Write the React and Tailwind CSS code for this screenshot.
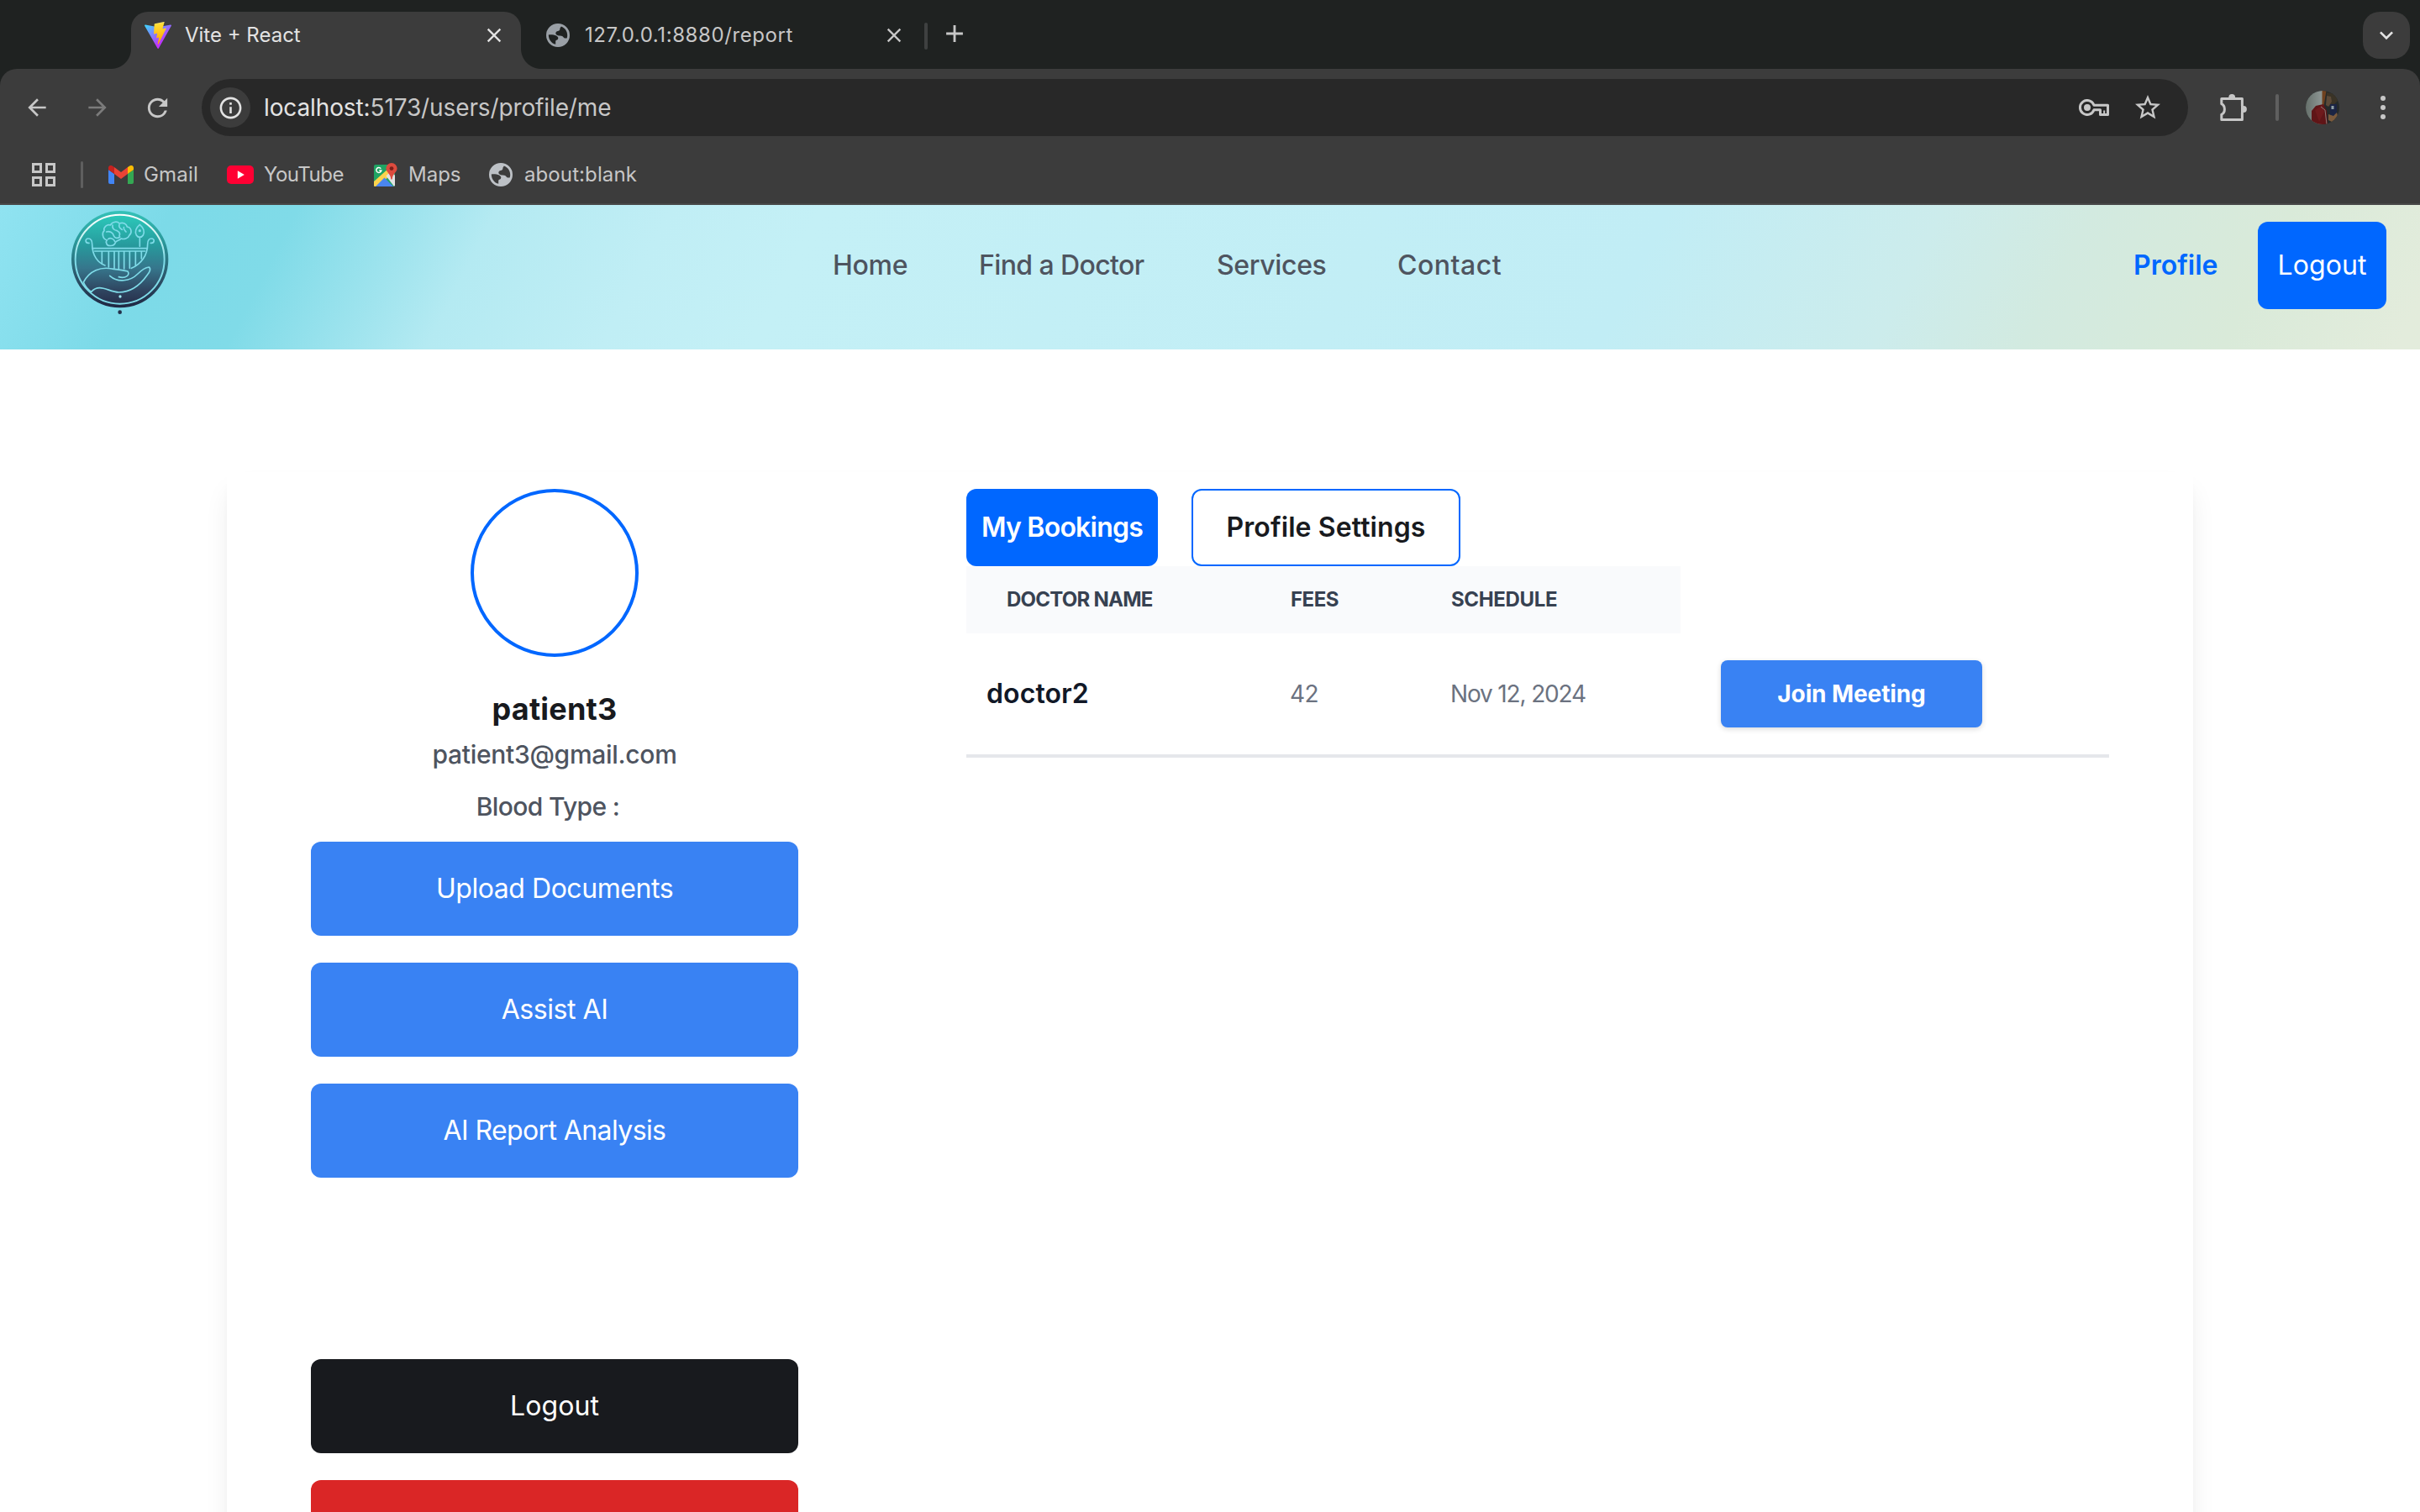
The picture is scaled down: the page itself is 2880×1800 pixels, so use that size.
import {
  MdAdd,
  MdArrowBack,
  MdArrowForward,
  MdClose,
  MdInfoOutline,
  MdKeyboardArrowDown,
  MdRefresh,
  MdStarBorder,
} from "react-icons/md";

function ViteLogo() {
  return (
    <svg className="size-8 shrink-0" viewBox="0 0 256 257">
      <defs>
        <linearGradient id="viteA" x1="-.828%" x2="57.636%" y1="7.652%" y2="78.411%">
          <stop offset="0%" stopColor="#41D1FF" />
          <stop offset="100%" stopColor="#BD34FE" />
        </linearGradient>
        <linearGradient id="viteB" x1="43.376%" x2="50.316%" y1="2.242%" y2="89.03%">
          <stop offset="0%" stopColor="#FFEA83" />
          <stop offset="8.333%" stopColor="#FFDD35" />
          <stop offset="100%" stopColor="#FFA800" />
        </linearGradient>
      </defs>
      <path
        fill="url(#viteA)"
        d="M255.153 37.938L134.897 252.976c-2.483 4.44-8.862 4.466-11.382.048L.875 37.958c-2.746-4.814 1.371-10.646 6.827-9.67l120.385 21.517a6.537 6.537 0 0 0 2.322-.004l117.867-21.483c5.438-.991 9.574 4.796 6.877 9.62Z"
      />
      <path
        fill="url(#viteB)"
        d="M185.432.063L96.44 17.501a3.268 3.268 0 0 0-2.634 3.014l-5.474 92.456a3.268 3.268 0 0 0 3.997 3.378l24.777-5.718c2.318-.535 4.413 1.507 3.936 3.838l-7.361 36.047c-.495 2.426 1.782 4.5 4.151 3.78l15.304-4.649c2.372-.72 4.652 1.36 4.15 3.788l-11.698 56.621c-.732 3.542 3.979 5.473 5.943 2.437l1.313-2.028l72.516-144.72c1.215-2.423-.88-5.186-3.54-4.672l-25.505 4.922c-2.396.462-4.435-1.77-3.759-4.114l16.646-57.705c.677-2.35-1.37-4.583-3.769-4.113Z"
      />
    </svg>
  );
}

function Globe({ className }) {
  return (
    <svg className={className} viewBox="2 2 20 20" fill="currentColor" fillRule="evenodd">
      <path d="M12 2a10 10 0 1 0 0 20a10 10 0 0 0 0-20zM4 11.6c2.6-.2 5 .1 6.600.8c1.600.8 2 2 1.300 3c-.6.8-1.900.6-1.900 1.800v2.500C6.600 18.900 4 15.600 4 11.600zM14.800 4.500C17.900 5.700 20 8.600 20 12c0 .9-.1 1.700-.4 2.500c-1.600.3-2.600-.3-3.300-1.300c-.7-1-2-.7-3.600-.9c-1.700-.2-2.900-1.200-2.600-2.500c.3-1.200 1.600-1.100 2.800-1.700c1.200-.6.5-1.900 1.100-2.600z" />
    </svg>
  );
}

function AppsGrid() {
  return (
    <svg className="size-7 shrink-0" viewBox="0 0 28 28" fill="none" stroke="#c7c7c7" strokeWidth="3">
      <rect x="1.500" y="1.500" width="9" height="9" />
      <rect x="17.500" y="1.500" width="9" height="9" />
      <rect x="1.500" y="17.500" width="9" height="9" />
      <rect x="17.500" y="17.500" width="9" height="9" />
    </svg>
  );
}

function GmailLogo() {
  return (
    <svg className="h-[22px] w-[30px] shrink-0" viewBox="0 0 30 22">
      <path fill="#4285f4" d="M2 22h5V10L0 5v15a2 2 0 0 0 2 2z" />
      <path fill="#34a853" d="M23 22h5a2 2 0 0 0 2-2V5l-7 5z" />
      <path fill="#fbbc04" d="M23 2v8l7-5V2.700c0-2.500-2.900-3.500-4.700-2.200z" />
      <path fill="#ea4335" d="M7 10V2l8 6l8-6v8l-8 6z" />
      <path fill="#c5221f" d="M0 2.700V5l7 5V2L4.700.5C2.900-.8 0 .2 0 2.700z" />
    </svg>
  );
}

function YouTubeLogo() {
  return (
    <svg className="h-[22px] w-8 shrink-0" viewBox="0 0 32 22">
      <rect width="32" height="22" rx="5" fill="#ff0033" />
      <path fill="#fff" d="M12.800 6.200v9.600l8-4.800z" />
    </svg>
  );
}

function MapsLogo() {
  return (
    <svg className="h-7 w-[30px] shrink-0" viewBox="0 0 30 28">
      <rect x="1" y="2" width="25" height="26" rx="2" fill="#1fa463" />
      <path fill="#fbd34d" d="M1 22L19 6l4 6L6 28H2a1 1 0 0 1-1-1z" />
      <path fill="#4a86f0" d="M3 28L13.500 17.500L24 28z" />
      <path fill="#e3e3e3" d="M15.500 15.500L22 9l4 6v11.500L25 28z" />
      <path fill="none" stroke="#fff" strokeWidth="1.500" d="M9.300 6.700A3 3 0 1 0 9.800 9H7.200" />
      <path fill="#dd4b3e" d="M22 0a6.600 6.600 0 0 1 6.600 6.600c0 4.400-5.600 6.400-5.900 13h-1.400c-.3-6.600-5.900-8.600-5.900-13A6.600 6.600 0 0 1 22 0z" />
      <circle cx="22" cy="6.600" r="2.400" fill="#7d1f1a" />
    </svg>
  );
}

function KeyIcon() {
  return (
    <svg className="h-5 w-9 shrink-0" viewBox="0 0 36 20" fill="none" stroke="#c7c7c7">
      <path
        strokeWidth="3"
        strokeLinejoin="round"
        d="M18 7.300A8.500 8.500 0 1 0 18 12.700H25.500V18.500H34.500V7.300z"
      />
      <circle cx="10" cy="10" r="4" fill="#c7c7c7" stroke="none" />
      <path strokeWidth="2" d="M30.200 13.500V18" />
    </svg>
  );
}

function PuzzleIcon() {
  return (
    <svg className="size-9 shrink-0" viewBox="0 0 36 36">
      <path
        fill="none"
        stroke="#c7c7c7"
        strokeWidth="3"
        strokeLinejoin="round"
        d="M3.800 7.500H28.400V32.500H3.800V26.300C8.600 24 8.600 16 3.800 13.700z"
      />
      <circle cx="16.200" cy="6" r="3.900" fill="#c7c7c7" />
      <circle cx="30" cy="20" r="3.900" fill="#c7c7c7" />
      <path fill="#3c3c3c" d="M12 9H20V13H12zM23 16H27V24H23z" />
    </svg>
  );
}

function Avatar() {
  return (
    <svg className="size-10 shrink-0" viewBox="0 0 40 40">
      <defs>
        <clipPath id="avatarClip">
          <circle cx="20" cy="20" r="20" />
        </clipPath>
        <linearGradient id="avatarWall" x1="0" x2="1" y1="0" y2="0">
          <stop offset="0" stopColor="#66706b" />
          <stop offset="1" stopColor="#8f9896" />
        </linearGradient>
      </defs>
      <g clipPath="url(#avatarClip)">
        <rect width="40" height="40" fill="#252a2a" />
        <rect width="20" height="40" fill="url(#avatarWall)" />
        <path fill="#70421f" d="M19.500 0h5l-3 18h-2z" />
        <path fill="#3a3326" d="M25 2l10 2l3 8l-6 6l-7-1z" />
        <path fill="#5c4a38" d="M25 6l5 1l1 6l-4 6l-3-2z" />
        <path fill="#5f1517" d="M7 40V24l5-6l9-2l4 8l1 16z" />
        <path fill="#6e1a1c" d="M11 23l9-6l2 8l-6 12z" />
        <path fill="none" stroke="#8a7a76" strokeWidth="1" d="M18 19l5 4l2 17" />
        <path fill="#1b2444" d="M29 16h8v14h-8z" />
        <rect x="30.500" y="18" width="3" height="4" fill="#8fa0a4" />
        <path fill="#7b5a3c" d="M27 28l6 2l4-4l1 4l-5 8l-6-3z" />
      </g>
    </svg>
  );
}

function SiteLogo() {
  return (
    <svg className="h-32 w-[122px] shrink-0" viewBox="66 24 366 384" fill="none">
      <defs>
        <linearGradient id="logoRim" x1="0" x2="0" y1="0" y2="1">
          <stop offset="0" stopColor="#35c2b8" />
          <stop offset=".35" stopColor="#2a9397" />
          <stop offset=".7" stopColor="#2c5268" />
          <stop offset="1" stopColor="#1f2742" />
        </linearGradient>
        <linearGradient id="logoFace" x1="0" x2="0" y1="0" y2="1">
          <stop offset="0" stopColor="#2cc9ba" />
          <stop offset=".35" stopColor="#27999c" />
          <stop offset=".6" stopColor="#36768c" />
          <stop offset=".85" stopColor="#2f4560" />
          <stop offset="1" stopColor="#27304c" />
        </linearGradient>
        <linearGradient id="logoRing" x1="0" x2="0" y1="0" y2="1">
          <stop offset="0" stopColor="#ffffff" />
          <stop offset=".25" stopColor="#c9f3f2" />
          <stop offset=".5" stopColor="#7fdbe8" />
          <stop offset="1" stopColor="#7fdbe8" />
        </linearGradient>
      </defs>
      <circle cx="248" cy="206" r="173" fill="url(#logoRim)" />
      <circle cx="248" cy="206" r="159" fill="url(#logoFace)" stroke="url(#logoRing)" strokeWidth="6" />
      <g stroke="#7fdbe8" strokeWidth="5" strokeLinecap="round" strokeLinejoin="round">
        <path d="M138 148c-14 2-16-16-3-16c12 0 14 10 14 20c0 40 20 66 46 76M358 148c14 2 16-16 3-16c-12 0-14 10-14 20c0 40-24 72-58 86" />
        <path d="M150 167H346M158 177H338M184 178V222M208 178V234M228 178V238M244 178V240M263 178V240M283 178V238M304 178V228M325 178V204" />
        <path d="M202 138c-18-6-18-28-10-34c-4-14 12-24 22-20c8-14 26-14 32-6c14-6 26 2 28 12c16 2 18 22 8 30c-4 12-20 16-30 12c-6 8-16 6-20 14c-4 14-30 16-32 2c-2-4 0-8 2-10" />
        <path d="M200 108c12-4 24 4 26 14c4 10 14 10 22 4M222 84c-2 12 6 18 16 20c8 4 12 10 8 18M246 82c-4 10 4 14 10 18M262 92c-2 8 4 12 8 16M206 134c8-6 20-2 24 8" />
        <path d="M319 82c-14 12-18 26-12 38c5 9 19 9 24 0c6-12 2-26-12-38zM319 128V160" />
        <path d="M118 288C140 246 180 232 220 240C245 243 262 245 276 249C286 262 268 276 244 269M212 265C240 290 284 286 312 258C324 246 338 236 352 234C360 240 354 252 346 262C318 302 284 324 244 324C206 322 176 290 146 322M118 288c6 14 16 26 28 34" />
      </g>
      <circle cx="319" cy="104" r="5" fill="#7fdbe8" />
      <circle cx="249" cy="339" r="5" fill="#9feaf2" />
      <circle cx="248" cy="395" r="7" fill="#22304a" />
    </svg>
  );
}

function TabStrip() {
  return (
    <div className="flex h-[82px] items-end bg-[#1f2221] pl-[132px]">
      <div className="size-6 bg-[radial-gradient(circle_at_0_0,transparent_23.5px,#3c3c3c_24.5px)]" />
      <div className="flex h-[68px] w-[464px] items-center rounded-t-[20px] bg-[#3c3c3c] pr-[18px] pb-3 pl-4">
        <ViteLogo />
        <span className="ml-4 flex-1 text-2xl text-[#e3e3e3]">Vite + React</span>
        <MdClose className="size-7 text-[#e3e3e3]" />
      </div>
      <div className="size-6 bg-[radial-gradient(circle_at_100%_0,transparent_23.5px,#3c3c3c_24.5px)]" />
      <div className="flex h-[68px] w-[434px] items-center pb-3 pl-1.5">
        <Globe className="size-7 shrink-0 text-[#9aa0a6]" />
        <span className="ml-[18px] flex-1 text-2xl tracking-[0.6px] text-[#c7c7c7]">127.0.0.1:8880/report</span>
        <MdClose className="size-7 text-[#c7c7c7]" />
      </div>
      <div className="mb-[23px] ml-[22px] h-8 w-1 rounded-full bg-[#3f4141]" />
      <MdAdd className="mb-[25px] ml-[15px] size-[34px] text-[#c7c7c7]" />
      <div className="mr-3 mb-3 ml-auto flex h-14 w-14 items-center justify-center rounded-[20px] bg-[#3c3c3c]">
        <MdKeyboardArrowDown className="size-8 text-[#e3e3e3]" />
      </div>
    </div>
  );
}

function Toolbar() {
  return (
    <div className="bg-[#1f2221]">
      <div className="flex h-[92px] items-center rounded-t-[20px] bg-[#3c3c3c] pl-7">
        <MdArrowBack className="size-8 text-[#c7c7c7]" />
        <MdArrowForward className="ml-10 size-8 text-[#7b7b7b]" />
        <MdRefresh className="ml-[38px] size-[35px] text-[#c7c7c7]" />
        <div className="ml-[35px] flex h-[68px] w-[2364px] items-center rounded-full bg-[#282828] pl-2.5">
          <div className="flex size-12 items-center justify-center rounded-full bg-[#3c3c3c]">
            <MdInfoOutline className="size-[31px] text-[#e3e3e3]" />
          </div>
          <span className="ml-4 flex-1 text-[28px] tracking-[-0.12px] text-[#c7c7c7]">
            <span className="text-[#e3e3e3]">localhost:</span>5173/users/profile/me
          </span>
          <KeyIcon />
          <MdStarBorder className="mr-[30px] ml-[28px] size-9 text-[#c7c7c7]" />
        </div>
        <div className="ml-9 flex items-center">
          <PuzzleIcon />
          <div className="ml-8 h-8 w-1 rounded-full bg-[#5f5f5f]" />
          <div className="ml-8">
            <Avatar />
          </div>
          <div className="ml-[49px] flex flex-col gap-[5px]">
            <div className="size-1.5 rounded-full bg-[#c7c7c7]" />
            <div className="size-1.5 rounded-full bg-[#c7c7c7]" />
            <div className="size-1.5 rounded-full bg-[#c7c7c7]" />
          </div>
        </div>
      </div>
    </div>
  );
}

function BookmarksBar() {
  return (
    <div className="flex h-[70px] items-center border-b-2 border-[#484848] bg-[#3c3c3c] pb-px pl-[38px] text-2xl text-[#c7c7c7]">
      <AppsGrid />
      <div className="ml-[30px] h-8 w-[3px] rounded-full bg-[#5f5f5f]" />
      <div className="ml-[30px] flex w-[141px] items-center">
        <GmailLogo />
        <span className="ml-3 tracking-[0.2px]">Gmail</span>
      </div>
      <div className="flex w-[174px] items-center">
        <YouTubeLogo />
        <span className="ml-3 tracking-[-0.5px]">YouTube</span>
      </div>
      <div className="flex w-[138px] items-center">
        <MapsLogo />
        <span className="ml-3">Maps</span>
      </div>
      <div className="flex items-center">
        <Globe className="size-7 shrink-0 text-[#bdc1c6]" />
        <span className="ml-3.5 tracking-[0.1px]">about:blank</span>
      </div>
    </div>
  );
}

function SiteHeader() {
  return (
    <header className="flex h-[172px] items-start bg-[linear-gradient(117deg,#90e3f1_0%,#7cdae8_7%,#80dbe8_12%,#a0e4ee_17%,#b4eaf2_20%,#c0eef5_27%,#c4f0f6_33%,#c1edf5_67%,#ccecec_78%,#d2eae0_84%,#d9ead9_92%,#e3ecdc_99%)] pl-[82px] text-[32px] leading-[64px]">
      <div className="mt-1">
        <SiteLogo />
      </div>
      <nav className="mt-10 ml-[787px] flex w-[1548px] font-medium text-[#4e545f]">
        <a className="w-[174px] tracking-[-0.3px]">Home</a>
        <a className="w-[283px] tracking-[-0.6px]">Find a Doctor</a>
        <a className="w-[215px] tracking-[-0.35px]">Services</a>
        <a className="tracking-[0.5px]">Contact</a>
      </nav>
      <a className="mt-10 w-[148px] font-semibold text-[#0067ff]">Profile</a>
      <button className="mt-5 h-[104px] w-[153px] rounded-xl bg-[#0067ff] tracking-[0.1px] text-white">
        Logout
      </button>
    </header>
  );
}

function Sidebar() {
  return (
    <aside className="flex w-[580px] flex-col items-center">
      <div className="size-[200px] shrink-0 rounded-full border-4 border-[#0067ff]" />
      <h3 className="mt-[42px] text-4xl leading-10 font-bold tracking-[0.2px] text-[#181a1e]">patient3</h3>
      <p className="mt-3 text-[30px] leading-[44px] font-medium tracking-[-0.3px] text-[#4e545f]">
        patient3@gmail.com
      </p>
      <p className="mt-[18px] mr-4 text-[30px] leading-[44px] font-medium tracking-[-0.65px] text-[#4e545f]">
        Blood Type :
      </p>
      <div className="mt-5 flex w-full flex-col gap-8 text-[32px] leading-[60px] text-white">
        <button className="h-28 rounded-xl bg-[#3982f3] tracking-[-0.45px]">Upload Documents</button>
        <button className="h-28 rounded-xl bg-[#3982f3] tracking-[-0.45px]">Assist AI</button>
        <button className="h-28 rounded-xl bg-[#3982f3] tracking-[-0.6px]">AI Report Analysis</button>
      </div>
      <div className="mt-[216px] flex w-full flex-col gap-8 text-[32px] leading-[60px] text-white">
        <button className="h-28 rounded-xl bg-[#181a1e] tracking-[0.1px]">Logout</button>
        <button className="h-28 rounded-xl bg-[#da2626]" />
      </div>
    </aside>
  );
}

function Bookings() {
  return (
    <section className="ml-[200px] w-[1360px]">
      <div className="flex gap-10 text-[32px] font-semibold">
        <button className="h-[92px] w-[228px] rounded-xl bg-[#0067ff] tracking-[-0.75px] text-white">
          My Bookings
        </button>
        <button className="h-[92px] w-80 rounded-xl border-2 border-[#0067ff] tracking-[0.1px] text-[#181a1e]">
          Profile Settings
        </button>
      </div>
      <div className="flex h-20 w-[850px] items-center bg-[#f9fafc] pl-12 text-2xl font-bold text-[#374151]">
        <span className="w-[338px] tracking-[-0.75px]">DOCTOR NAME</span>
        <span className="w-[191px] tracking-[-0.5px]">FEES</span>
        <span className="tracking-[-0.35px]">SCHEDULE</span>
      </div>
      <div className="flex h-[148px] items-center border-b-4 border-[#e5e7eb] pl-6 text-[28px] text-[#6b7280]">
        <span className="w-[361px] text-[32px] font-semibold tracking-[0.1px] text-[#111827]">doctor2</span>
        <span className="w-[191px] tracking-[-0.5px]">42</span>
        <span className="w-[322px] tracking-[-1.15px]">Nov 12, 2024</span>
        <button className="h-20 w-[311px] rounded-lg bg-[#3982f3] font-bold tracking-[-0.1px] text-white shadow-[0_2px_6px_rgba(0,0,0,0.15)]">
          Join Meeting
        </button>
      </div>
    </section>
  );
}

export default function App() {
  return (
    <div className="flex h-[1800px] w-[2880px] flex-col overflow-hidden bg-white font-['Inter',sans-serif] whitespace-nowrap *:shrink-0">
      <TabStrip />
      <Toolbar />
      <BookmarksBar />
      <SiteHeader />
      <main className="mx-[270px] mt-[146px] flex h-[1500px] items-start bg-white px-[100px] pt-5 shadow-[0_20px_30px_-6px_rgba(0,0,0,0.1),0_8px_12px_-8px_rgba(0,0,0,0.1)]">
        <Sidebar />
        <Bookings />
      </main>
    </div>
  );
}
